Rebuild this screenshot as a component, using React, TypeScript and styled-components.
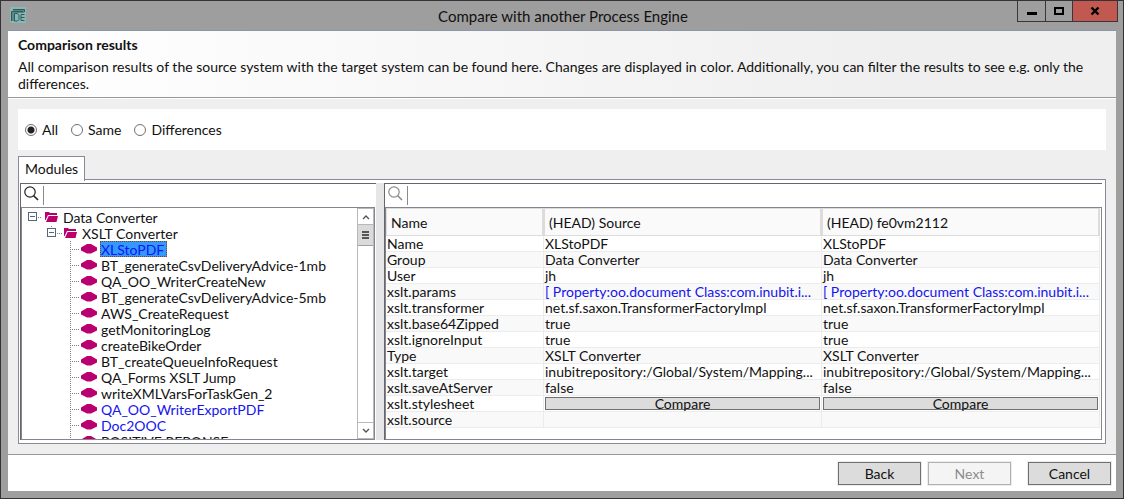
import React, { useState } from "react";
import styled, { createGlobalStyle, css } from "styled-components";

const GlobalStyle = createGlobalStyle`
  * { box-sizing: border-box; }
  body { margin: 0; }
  body, button, input, table { font: 14px/16px Lato, "Open Sans", sans-serif; color: #111; }
`;

const Window = styled.div`
  display: flex;
  flex-direction: column;
  height: 100vh;
  padding: 0 7px 7px;
  border: 1px solid #333236;
  background: #9e9e9e;
`;

const TitleBar = styled.header`
  display: flex;
  flex: none;
  height: 30px;
  padding-left: 2px;
  border-bottom: 1px solid #8b97a8;
`;

const AppIcon = styled.svg`
  flex: none;
  width: 16px;
  height: 16px;
  margin-top: 6px;
  margin-right: 83px;
`;

const Title = styled.h1`
  flex: 1;
  margin: 0;
  padding-top: 6px;
  font-size: 15px;
  line-height: 18px;
  font-weight: 400;
  text-align: center;
`;

const Controls = styled.div`
  display: flex;
  height: 21px;
  margin-right: -2px;
  border: solid #38363a;
  border-width: 0 1px 1px;
`;

const ControlButton = styled.button<{ $close?: boolean }>`
  width: ${(p) => (p.$close ? 45 : 27)}px;
  padding: 0;
  border: 0;
  border-left: 1px solid #38363a;
  background: ${(p) => (p.$close ? "#c25950" : "transparent")};
  &:first-child { border-left: 0; }
  svg { display: block; margin: 0 auto; }
`;

const Content = styled.main`
  display: flex;
  flex: 1;
  flex-direction: column;
  min-height: 0;
  background: #efefef;
`;

const Intro = styled.section`
  flex: none;
  padding: 5px 10px;
  border-bottom: 1px solid #989898;
  background: linear-gradient(90deg, #fff, #efefef 80%);
  box-shadow: 0 1px #fff;
  line-height: 17px;
`;

const Heading = styled.h2`
  margin: 0 0 5px;
  font-size: 14px;
  line-height: 17px;
  font-weight: 700;
`;

const Text = styled.p`
  margin: 0;
`;

const FilterBar = styled.div`
  display: flex;
  flex: none;
  align-items: center;
  gap: 13px;
  height: 41px;
  margin: 11px 10px 6px;
  padding: 0 7px;
  background: #fff;
`;

const Option = styled.label`
  display: flex;
  align-items: center;
  gap: 5px;
`;

const Radio = styled.input`
  appearance: none;
  width: 12px;
  height: 12px;
  margin: 0;
  border: 1px solid #707070;
  border-radius: 50%;
  background: #fff;
  &:checked { background: radial-gradient(circle, #222 3px, #fff 4px); }
`;

const TabList = styled.div`
  display: flex;
  flex: none;
  padding: 0 10px;
`;

const Tab = styled.button`
  position: relative;
  z-index: 1;
  height: 25px;
  margin-bottom: -2px;
  padding: 0 6px 1px;
  border: 1px solid #8a8a96;
  border-bottom: 0;
  background: #fff;
`;

const TabPanel = styled.div`
  display: flex;
  flex: 1;
  min-height: 0;
  margin: 0 10px 10px;
  padding: 3px 3px 3px 1px;
  border: 1px solid #8a8a96;
  background: #fff;
`;

const Pane = styled.section<{ $fixed?: boolean }>`
  display: flex;
  flex-direction: column;
  min-width: 0;
  border-top: 1px solid #66666c;
  border-left: 1px solid #66666c;
  ${(p) => (p.$fixed ? css`flex: 0 0 356px; padding-right: 1px;` : css`flex: 1;`)}
`;

const Splitter = styled.div`
  flex: 0 0 8px;
  background: #e6e6e6;
`;

const SearchRow = styled.label`
  display: flex;
  flex: none;
  gap: 4px;
  height: 23px;
  padding: 2px 2px 2px 3px;
`;

const SearchInput = styled.input`
  flex: 1;
  min-width: 0;
  height: 19px;
  padding: 0 2px;
  border: 0;
  border-left: 1px solid #8a8a8a;
  outline: 0;
  background: transparent;
`;

const Viewport = styled.div`
  display: flex;
  flex: 1;
  min-height: 0;
  overflow: hidden;
  border: 1px solid #858590;
`;

const Tree = styled.ul`
  flex: 1;
  min-width: 0;
  margin: 0;
  padding: 1px 0 0 5px;
  list-style: none;
`;

const TreeRow = styled.li<{ $level: number }>`
  display: flex;
  align-items: center;
  height: 16px;
  padding-left: ${(p) => [0, 19, 42][p.$level]}px;
  white-space: nowrap;
  svg { flex: none; }
`;

const TreeLabel = styled.span<{ $changed?: boolean; $selected?: boolean }>`
  height: 16px;
  padding: 0 1px;
  line-height: 17px;
  color: ${(p) => (p.$changed ? "#1414f0" : "#111")};
  ${(p) => p.$selected && css`
    padding-right: 3px;
    background: #3399ff;
    outline: 1px dotted #7a4a10;
    outline-offset: -1px;
  `}
`;

const ScrollBar = styled.div`
  display: flex;
  flex: 0 0 17px;
  flex-direction: column;
  justify-content: space-between;
  border: 1px solid #b8b8b8;
  border-width: 0 1px;
`;

const ScrollButton = styled.button`
  display: block;
  height: 17px;
  padding: 0;
  border: solid #b8b8b8;
  border-width: 1px 0;
  background: #fff;
  svg { display: block; margin: auto; }
`;

const Thumb = styled.div`
  display: flex;
  height: 21px;
  margin-bottom: auto;
  align-items: center;
  justify-content: center;
  border-bottom: 1px solid #a0a0a0;
  background: #dadada;
`;

const Table = styled.table`
  align-self: flex-start;
  width: 100%;
  margin-right: 1px;
  table-layout: fixed;
  border-collapse: separate;
  border-spacing: 0;
`;

const NameCol = styled.col`
  width: 158px;
`;

const Th = styled.th`
  height: 28px;
  padding: 1px 4px 0;
  border: 1px solid #dcdcdc;
  border-width: 1px 2px 1px 1px;
  background: #fafafa;
  font-weight: 400;
  text-align: left;
`;

const Tr = styled.tr`
  &:nth-child(even) { background: #f9f9f9; }
`;

const Td = styled.td<{ $changed?: boolean }>`
  height: 16px;
  padding: 0 1px;
  border: solid #ececec;
  border-width: 0 1px 1px 0;
  line-height: 15px;
  white-space: nowrap;
  overflow: hidden;
  color: ${(p) => (p.$changed ? "#1414f0" : "#111")};
`;

const CompareButton = styled.button`
  display: block;
  width: 100%;
  height: 13px;
  padding: 0;
  border: 1px solid #707070;
  background: #dcdcdc;
  line-height: 11px;
`;

const Footer = styled.footer`
  display: flex;
  flex: none;
  justify-content: flex-end;
  gap: 7px;
  height: 37px;
  padding: 7px 5px 0;
  border-top: 1px solid #989898;
  background: #fff;
`;

const Group = styled.div`
  display: flex;
  gap: 7px;
  margin-right: 10px;
`;

const FooterButton = styled.button`
  width: 83px;
  height: 23px;
  padding: 0;
  border: 1px solid #707070;
  background: #dcdcdc;
  outline: 1px solid #ececec;
  &:disabled { color: #8c8c8c; border-color: #adb2b5; background: #f4f4f4; }
`;

const SearchIcon = ({ color }: { color: string }) => (
  <svg width="15" height="15" viewBox="0 0 15 15" fill="none" stroke={color} strokeWidth="1.2">
    <circle cx="6" cy="6" r="5.2" />
    <path d="M9.7 9.7 14 14" strokeWidth="1.6" />
  </svg>
);

const Toggle = ({ nested }: { nested?: boolean }) => (
  <svg width="17" height="16" viewBox="0 0 17 16" fill="none" stroke="#53667a">
    <rect x="1.5" y="3.5" width="8" height="8" />
    <path d="M3 7.5h5" />
    <path d={nested ? "M11 8.5h5M5.5 1v2" : "M11 8.5h4"} stroke="#808080" strokeDasharray="1 1" />
  </svg>
);

const Folder = () => (
  <svg width="18" height="16" viewBox="0 0 18 16">
    <path d="M1 3h4l1 1h7v2H4L1.600 11H1z" fill="#b9006e" />
    <path d="M4.600 7H14l-1.500 6H2z" fill="#b9006e" />
  </svg>
);

const Module = () => (
  <svg width="31" height="16" viewBox="0 0 31 16">
    <path d="M1.5 0v16M3 8.5h8" stroke="#808080" strokeDasharray="1 1" />
    <path d="M12 6.500 18 3h4l6 3.500v3L22 12.500h-4L12 9.500z" fill="#b9006e" />
  </svg>
);

const modules: [string, boolean?][] = [
  ["XLStoPDF", true],
  ["BT_generateCsvDeliveryAdvice-1mb"],
  ["QA_OO_WriterCreateNew"],
  ["BT_generateCsvDeliveryAdvice-5mb"],
  ["AWS_CreateRequest"],
  ["getMonitoringLog"],
  ["createBikeOrder"],
  ["BT_createQueueInfoRequest"],
  ["QA_Forms XSLT Jump"],
  ["writeXMLVarsForTaskGen_2"],
  ["QA_OO_WriterExportPDF", true],
  ["Doc2OOC", true],
  ["POSITIVE REPONSE"],
];

const properties: [string, string][] = [
  ["Name", "XLStoPDF"],
  ["Group", "Data Converter"],
  ["User", "jh"],
  ["xslt.params", "[ Property:oo.document Class:com.inubit.i..."],
  ["xslt.transformer", "net.sf.saxon.TransformerFactoryImpl"],
  ["xslt.base64Zipped", "true"],
  ["xslt.ignoreInput", "true"],
  ["Type", "XSLT Converter"],
  ["xslt.target", "inubitrepository:/Global/System/Mapping..."],
  ["xslt.saveAtServer", "false"],
  ["xslt.stylesheet", "Compare"],
  ["xslt.source", ""],
];

const PropertyCell = ({ name, value }: { name: string; value: string }) => (
  <Td $changed={name === "xslt.params"}>
    {name === "xslt.stylesheet" ? <CompareButton>{value}</CompareButton> : value}
  </Td>
);

export default function App() {
  const [filter, setFilter] = useState("All");
  return (
    <Window>
      <GlobalStyle />
      <TitleBar>
        <AppIcon viewBox="0 0 16 16">
          <path fill="#86b8b5" d="M0 0h16v16H0z" />
          <path fill="#5c8686" d="M3 2h11v4H3zM1 5h4v9H1z" />
          <path
            d="M3 2.500h11.500V5M1.500 14V4.500H13M4.500 6.500v7.500M5 6.500h2.500l1.500 2v4l-1.500 1.500H4.500M14.500 7.500H11v6h3.500M11 10.500h3.500"
            fill="none"
            stroke="#36585c"
          />
        </AppIcon>
        <Title>Compare with another Process Engine</Title>
        <Controls>
          <ControlButton aria-label="Minimize">
            <svg width="10" height="20"><path d="M0 11h10v3H0z" /></svg>
          </ControlButton>
          <ControlButton aria-label="Maximize">
            <svg width="10" height="20"><path d="M1 7h8v6H1z" fill="none" stroke="#000" strokeWidth="2" /></svg>
          </ControlButton>
          <ControlButton $close aria-label="Close">
            <svg width="10" height="20"><path d="M1.500 6.500 8.500 13.500M8.500 6.500 1.500 13.500" stroke="#000" strokeWidth="2.4" /></svg>
          </ControlButton>
        </Controls>
      </TitleBar>
      <Content>
        <Intro>
          <Heading>Comparison results</Heading>
          <Text>
            All comparison results of the source system with the target system can be found here. Changes are displayed
            in color. Additionally, you can filter the results to see e.g. only the differences.
          </Text>
        </Intro>
        <FilterBar role="radiogroup" aria-label="Filter results">
          {["All", "Same", "Differences"].map((name) => (
            <Option key={name}>
              <Radio type="radio" name="filter" checked={filter === name} onChange={() => setFilter(name)} />
              {name}
            </Option>
          ))}
        </FilterBar>
        <TabList role="tablist">
          <Tab role="tab" aria-selected>Modules</Tab>
        </TabList>
        <TabPanel role="tabpanel">
          <Pane $fixed>
            <SearchRow>
              <SearchIcon color="#222" />
              <SearchInput type="text" aria-label="Search modules" />
            </SearchRow>
            <Viewport>
              <Tree>
                <TreeRow $level={0}><Toggle /><Folder /><TreeLabel>Data Converter</TreeLabel></TreeRow>
                <TreeRow $level={1}><Toggle nested /><Folder /><TreeLabel>XSLT Converter</TreeLabel></TreeRow>
                {modules.map(([name, changed], i) => (
                  <TreeRow $level={2} key={name}>
                    <Module />
                    <TreeLabel $changed={changed} $selected={i === 0}>{name}</TreeLabel>
                  </TreeRow>
                ))}
              </Tree>
              <ScrollBar>
                <ScrollButton aria-label="Scroll up">
                  <svg width="8" height="6"><path d="M1 5l3-3 3 3" fill="none" stroke="#555" strokeWidth="1.4" /></svg>
                </ScrollButton>
                <Thumb>
                  <svg width="7" height="8"><path d="M0 1h7M0 4h7M0 7h7" stroke="#555" strokeWidth="2" /></svg>
                </Thumb>
                <ScrollButton aria-label="Scroll down">
                  <svg width="8" height="6"><path d="M1 1l3 3 3-3" fill="none" stroke="#555" strokeWidth="1.4" /></svg>
                </ScrollButton>
              </ScrollBar>
            </Viewport>
          </Pane>
          <Splitter />
          <Pane>
            <SearchRow>
              <SearchIcon color="#8a8a8a" />
              <SearchInput type="text" aria-label="Search properties" />
            </SearchRow>
            <Viewport>
              <Table>
                <colgroup><NameCol /><col /><col /></colgroup>
                <thead>
                  <tr><Th>Name</Th><Th>(HEAD) Source</Th><Th>(HEAD) fe0vm2112</Th></tr>
                </thead>
                <tbody>
                  {properties.map(([name, value]) => (
                    <Tr key={name}>
                      <Td>{name}</Td>
                      <PropertyCell name={name} value={value} />
                      <PropertyCell name={name} value={value} />
                    </Tr>
                  ))}
                </tbody>
              </Table>
            </Viewport>
          </Pane>
        </TabPanel>
      </Content>
      <Footer>
        <Group>
          <FooterButton>Back</FooterButton>
          <FooterButton disabled>Next</FooterButton>
        </Group>
        <FooterButton>Cancel</FooterButton>
      </Footer>
    </Window>
  );
}
